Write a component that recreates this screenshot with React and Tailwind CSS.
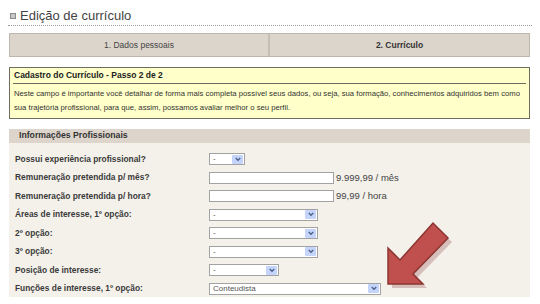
import React from "react";

const rows = [
  { label: "Possui experiência profissional?", type: "select", w: "w-[36px]" },
  { label: "Remuneração pretendida p/ mês?", type: "input", hint: "9.999,99 / mês" },
  { label: "Remuneração pretendida p/ hora?", type: "input", hint: "99,99 / hora" },
  { label: "Áreas de interesse, 1º opção:", type: "select", w: "w-[109px]" },
  { label: "2º opção:", type: "select", w: "w-[109px]" },
  { label: "3º opção:", type: "select", w: "w-[109px]" },
  { label: "Posição de interesse:", type: "select", w: "w-[70px]" },
  { label: "Funções de interesse, 1º opção:", type: "select", w: "w-[172px]", value: "Conteudista" },
];

function Select({ w, value = "-" }) {
  return (
    <div className={`flex h-[12px] items-center border border-[#a2a2a2] bg-white ${w}`}>
      <span className="flex-1 pl-[3px] text-[8px] leading-none text-[#555]">{value}</span>
      <span className="mr-[1px] flex h-[9px] w-[11px] items-center justify-center rounded-[1px] bg-[#c4d4fb]">
        <svg viewBox="0 0 8 6" className="h-[5px] w-[6px]">
          <path d="M1 1l3 3 3-3" fill="none" stroke="#4a5f8a" strokeWidth="1.7" />
        </svg>
      </span>
    </div>
  );
}

function Field({ row }) {
  if (row.type === "input") {
    return (
      <div className="flex items-center">
        <div className="h-[12px] w-[125px] border border-[#a2a2a2] bg-white" />
        <span className="pl-[2px] text-[9.5px] text-[#444]">{row.hint}</span>
      </div>
    );
  }
  return <Select w={row.w} value={row.value} />;
}

export default function App() {
  return (
    <div className="relative h-[304px] w-[540px] overflow-hidden bg-white font-['Liberation_Sans',Arial,sans-serif] text-[#333]">
      {/* Title */}
      <div className="mx-[8px] flex h-[26px] items-end border-b border-dotted border-[#9a9a9a] pb-[3px]">
        <div className="mb-[3px] ml-[2px] h-[6px] w-[6px] border border-[#8a8a8a] bg-[#c8c8c8]" />
        <span className="ml-[4px] text-[13px] leading-none text-[#444]">Edição de currículo</span>
      </div>

      {/* Steps */}
      <div className="mx-[9px] mt-[7px] flex h-[24px] w-[521px] border border-[#bdb6ac] bg-[#dcd5cc] text-[8.5px]">
        <div className="flex w-[260px] items-center justify-center border-r-2 border-[#c5beb4] text-[#444]">
          1. Dados pessoais
        </div>
        <div className="flex flex-1 items-center justify-center font-bold text-[#333]">2. Currículo</div>
      </div>

      {/* Notice */}
      <div className="mx-[9px] mt-[10px] h-[52px] w-[521px] border border-[#6e6e60] bg-[#ffffc9] px-[3px]">
        <div className="flex h-[16px] items-center border-b border-[#6e6e60] pl-[1px] text-[8.5px] font-bold text-[#222]">
          Cadastro do Currículo - Passo 2 de 2
        </div>
        <p className="pl-[1px] pt-[3px] text-[7.7px] leading-[14px] text-[#333]">
          Neste campo é importante você detalhar de forma mais completa possível seus dados, ou seja, sua formação, conhecimentos adquiridos bem como sua trajetória profissional, para que, assim, possamos avaliar melhor o seu perfil.
        </p>
      </div>

      {/* Section */}
      <div className="mx-[9px] mt-[10px] w-[521px]">
        <div className="flex h-[14px] items-center bg-[#ddd5cb] pl-[10px] text-[8.7px] font-bold text-[#333]">
          Informações Profissionais
        </div>
        <div className="h-[154px] bg-[#f4f1eb] pl-[6px] pt-[7px]">
          {rows.map((row) => (
            <div key={row.label} className="flex h-[18.5px] items-center">
              <div className="w-[194px] text-[8.4px] font-bold text-[#3a3a3a]">{row.label}</div>
              <Field row={row} />
            </div>
          ))}
        </div>
      </div>

      {/* Annotation arrow */}
      <svg className="absolute left-0 top-0" width="540" height="304" viewBox="0 0 540 304">
        <polygon
          points="390,250 402,262 435,225 450,240 415,276 425,286 390,286"
          fill="#7a2a28"
          opacity="0.25"
          transform="translate(2,2)"
        />
        <polygon
          points="388,248 400,260 433,223 448,238 413,274 423,284 388,284"
          fill="#c0504d"
          stroke="#8c3432"
          strokeWidth="1.5"
          strokeLinejoin="miter"
        />
      </svg>
    </div>
  );
}
